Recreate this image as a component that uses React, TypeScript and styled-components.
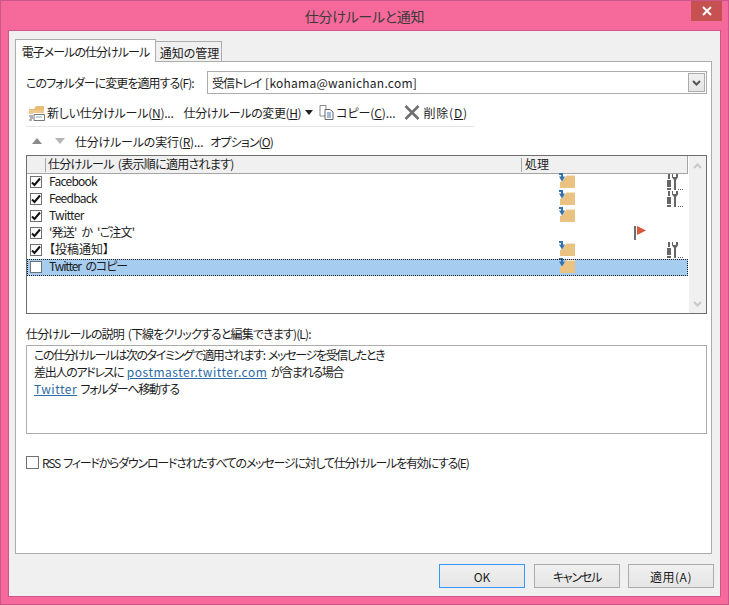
import React from "react";
import styled, { createGlobalStyle } from "styled-components";

const Global = createGlobalStyle`
  html, body { margin: 0; padding: 0; background: #f6699b; }
  * { box-sizing: border-box; }
`;

const Win = styled.div`
  width: 729px;
  height: 605px;
  background: #f6699b;
  border: 1px solid #c9578a;
  display: flex;
  flex-direction: column;
  padding: 0 7px 7px 7px;
  font-family: "Noto Sans CJK JP", "Noto Sans", sans-serif;
  font-feature-settings: "palt";
  font-size: 12px;
  color: #1c1c1c;
  overflow: hidden;
  position: relative;
`;
const TitleBar = styled.div`
  height: 29px;
  flex: none;
  display: flex;
  align-items: center;
  justify-content: center;
  font-size: 14px;
  letter-spacing: -0.3px;
  color: #3a3a3a;
  padding-top: 1px;
`;
const Close = styled.div`
  position: absolute;
  top: 0;
  right: 6px;
  width: 31px;
  height: 20px;
  background: #c75050;
  display: flex;
  align-items: center;
  justify-content: center;
`;
const Client = styled.div`
  flex: 1;
  background: #f0f0f0;
  border: 1px solid #d0558a;
  display: flex;
  flex-direction: column;
  padding: 8px 8px 8px 6px;
`;
const Tabs = styled.div`
  display: flex;
  align-items: flex-end;
  height: 23px;
  flex: none;
  margin-bottom: -1px;
  position: relative;
  z-index: 1;
`;
const Tab = styled.div<{ $active?: boolean }>`
  height: ${(p) => (p.$active ? 23 : 21)}px;
  width: ${(p) => (p.$active ? 141 : 67)}px;
  background: ${(p) => (p.$active ? "#fff" : "#f0f0f0")};
  border: 1px solid #acacac;
  border-bottom: ${(p) => (p.$active ? "none" : "1px solid #acacac")};
  margin-left: ${(p) => (p.$active ? 0 : -1)}px;
  display: flex;
  align-items: center;
  justify-content: center;
  white-space: nowrap;
  padding-top: ${(p) => (p.$active ? 0 : 1)}px;
  padding-left: ${(p) => (p.$active ? 0 : 2)}px;
`;
const Panel = styled.div`
  flex: 1;
  background: #fff;
  border: 1px solid #acacac;
  padding: 9px 4px 0 10px;
  display: flex;
  flex-direction: column;
`;
const Txt = styled.span<{ $ls?: number }>`
  letter-spacing: ${(p) => p.$ls ?? 0}px;
  word-spacing: 2px;
  white-space: nowrap;
`;
const FolderRow = styled.div`
  display: flex;
  align-items: center;
  height: 23px;
`;
const FolderLabel = styled.div`
  width: 181px;
  flex: none;
  white-space: nowrap;
`;
const Combo = styled.div`
  flex: 1;
  height: 23px;
  border: 1px solid #acacac;
  display: flex;
  align-items: center;
  justify-content: space-between;
  padding: 0 1px 0 4px;
`;
const ComboButton = styled.div`
  width: 17px;
  height: 19px;
  border: 1px solid #acacac;
  background: linear-gradient(#f0f0f0, #e5e5e5);
  display: flex;
  align-items: center;
  justify-content: center;
`;
const Toolbar = styled.div`
  width: 448px;
  height: 28px;
  margin-top: 5px;
  border-bottom: 1px solid #e6e6e6;
  display: flex;
  align-items: center;
  padding: 0 0 0 2px;
`;
const ToolItem = styled.div<{ $ml?: number; $gap?: number }>`
  display: flex;
  align-items: center;
  gap: ${(p) => p.$gap ?? 2}px;
  margin-left: ${(p) => p.$ml ?? 0}px;
  white-space: nowrap;
`;
const Toolbar2 = styled.div`
  height: 24px;
  margin-top: 2px;
  display: flex;
  align-items: center;
  padding-left: 6px;
`;
const Key = styled.span`
  text-decoration: underline;
  text-underline-offset: 1px;
`;
const ListBox = styled.div`
  height: 159px;
  margin-top: 2px;
  border: 1px solid #6e6e6e;
  display: flex;
  flex: none;
`;
const ListMain = styled.div`
  flex: 1;
  display: flex;
  flex-direction: column;
`;
const HeaderRow = styled.div`
  height: 18px;
  flex: none;
  background: #f0f0f0;
  border-bottom: 1px solid #a5a5a5;
  border-right: 1px solid #a5a5a5;
  display: grid;
  grid-template-columns: 18px 476px 1fr;
  align-items: center;
`;
const HeaderCell = styled.div<{ $pad: number }>`
  height: 14px;
  line-height: 12px;
  border-left: 1px solid #a5a5a5;
  padding-left: ${(p) => p.$pad}px;
  white-space: nowrap;
`;
const Row = styled.div<{ $sel?: boolean }>`
  height: 17px;
  flex: none;
  display: grid;
  grid-template-columns: 19px 475px 1fr;
  align-items: center;
  background: ${(p) => (p.$sel ? "#a6cdf0" : "transparent")};
  outline: ${(p) => (p.$sel ? "1px dotted #222" : "none")};
  outline-offset: -1px;
`;
const CheckBox = styled.div`
  width: 12px;
  height: 12px;
  margin: -1px 0 0 3px;
  background: #fff;
  border: 1px solid #707070;
  display: flex;
  align-items: center;
  justify-content: center;
`;
const RowName = styled.div<{ $ls: number }>`
  padding-left: 3px;
  margin-top: -4px;
  white-space: nowrap;
  letter-spacing: ${(p) => p.$ls}px;
  word-spacing: 3px;
`;
const Actions = styled.div`
  display: grid;
  grid-template-columns: 75px 33px 1fr;
  padding-left: 38px;
  align-items: start;
  height: 17px;
`;
const ScrollBar = styled.div`
  width: 17px;
  flex: none;
  background: #f0f0f0;
  display: flex;
  flex-direction: column;
  justify-content: space-between;
  align-items: center;
  padding: 7px 0 6px;
  margin-left: 1px;
`;
const DescLabel = styled.div`
  margin-top: 11px;
  height: 17px;
  line-height: 17px;
`;
const DescBox = styled.div`
  height: 89px;
  margin-top: 3px;
  border: 1px solid #acacac;
  padding: 0 7px;
  line-height: 17px;
`;
const Link = styled.span`
  color: #2c6aa5;
  text-decoration: underline;
  text-underline-offset: 1px;
  letter-spacing: 0.5px;
`;
const RssRow = styled.div`
  display: flex;
  align-items: center;
  gap: 3px;
  margin-top: 20px;
  height: 16px;
`;
const RssBox = styled.div`
  width: 13px;
  height: 13px;
  flex: none;
  border: 1px solid #707070;
  background: #fff;
`;
const Footer = styled.div`
  display: flex;
  justify-content: flex-end;
  gap: 8px;
  margin-top: 10px;
  margin-right: -2px;
  height: 24px;
  flex: none;
`;
const Btn = styled.div<{ $def?: boolean }>`
  width: 86px;
  height: 24px;
  margin-right: ${(p) => (p.$def ? 1 : 0)}px;
  border: 1px solid ${(p) => (p.$def ? "#3399ff" : "#acacac")};
  background: linear-gradient(#f0f0f0, #e5e5e5);
  display: flex;
  align-items: center;
  justify-content: center;
`;
const IconSlot = styled.div<{ $top: number }>`
  margin-top: ${(p) => p.$top}px;
  height: 0;
`;

const Check = () => (
  <svg width="10" height="10" viewBox="0 0 10 10">
    <path d="M1 5.5 L3.5 8 L9 1.5" fill="none" stroke="#111" strokeWidth="2" />
  </svg>
);
const MoveIcon = () => (
  <svg width="17" height="16" viewBox="0 0 17 16" style={{ display: "block" }}>
    <path d="M1 15 V9 H2 L8 2 H16 V15 Z" fill="#eac282" />
    <path d="M8 2 H16 V3 H7 Z" fill="#f7e4c4" />
    <path d="M0 0 H4 V3.5 H6 L3 8.5 L0 3.5 H2 V2 H0 Z" fill="#3672ad" />
  </svg>
);
const ToolsIcon = () => (
  <svg width="16" height="16" viewBox="0 0 16 16" style={{ display: "block" }}>
    <path d="M1 0 H3 V5 H1 Z M0 6 H4 V13 H0 Z M0 14 H4 V16 H0 Z" fill="#666" />
    <path d="M5 0 H6 V3 H9 V0 H11 V3.5 L9 6 V16 H7 V6 L5 3.5 Z" fill="#666" />
    <path d="M11 15 h1 v1 h-1 z M13 15 h1 v1 h-1 z M15 15 h1 v1 h-1 z" fill="#666" />
  </svg>
);
const FlagIcon = () => (
  <svg width="13" height="15" viewBox="0 0 13 15" style={{ display: "block" }}>
    <path d="M0 0 H2 V14 H0 Z" fill="#6d6d6d" />
    <path d="M3 0 L12 4.5 L3 9 Z" fill="#d9583b" />
  </svg>
);
const NewRuleIcon = () => (
  <svg width="17" height="16" viewBox="0 0 17 16">
    <path d="M1 6 V4 H6 L8 1 H16 V6 Z" fill="#e8bd78" />
    <path d="M1 9 V5 H16 V8 H5 V9 Z" fill="#edc98d" />
    <path d="M6 9.5 H16.5 V15.5 H6 Z" fill="#fff" stroke="#777" />
    <path d="M8 12 H14" stroke="#8aa" />
    <path d="M1 11 H5 M2 13 H5 M1 15 H4" stroke="#666" />
  </svg>
);
const CopyIcon = () => (
  <svg width="15" height="15" viewBox="0 0 15 15">
    <path d="M1 .5 H7 V11 H1 Z" fill="#fff" stroke="#888" />
    <path d="M6 4.5 H11 L14 7 V14.5 H6 Z" fill="#fff" stroke="#666" />
    <path d="M8 8 H12 M8 10 H12 M8 12 H12" stroke="#3f77b0" />
  </svg>
);
const DeleteIcon = () => (
  <svg width="16" height="15" viewBox="0 0 16 15">
    <path d="M1.5 1 L14.5 14 M14.5 1 L1.5 14" stroke="#707070" strokeWidth="2.6" />
  </svg>
);
const Tri = ({ up, color }: { up?: boolean; color: string }) => (
  <svg width="10" height="6" viewBox="0 0 10 6">
    <path d={up ? "M5 0 L10 6 H0 Z" : "M0 0 H10 L5 6 Z"} fill={color} />
  </svg>
);
const Chevron = ({ up, color, w = 2 }: { up?: boolean; color: string; w?: number }) => (
  <svg width="9" height="6" viewBox="0 0 9 6">
    <path d={up ? "M1 5 L4.5 1.5 L8 5" : "M1 1 L4.5 4.5 L8 1"} fill="none" stroke={color} strokeWidth={w} />
  </svg>
);

const rules: { name: string; ls: number; checked: boolean; move?: boolean; flag?: boolean; tools?: boolean; sel?: boolean }[] = [
  { name: "Facebook", ls: -0.75, checked: true, move: true, tools: true },
  { name: "Feedback", ls: -0.75, checked: true, move: true, tools: true },
  { name: "Twitter", ls: -0.7, checked: true, move: true },
  { name: "'発送' か 'ご注文'", ls: -0.8, checked: true, flag: true },
  { name: "【投稿通知】", ls: 0, checked: true, move: true, tools: true },
  { name: "Twitter のコピー", ls: -1.1, checked: false, move: true, sel: true },
];

export default function App() {
  return (
    <Win>
      <Global />
      <TitleBar>仕分けルールと通知</TitleBar>
      <Close>
        <svg width="10" height="10" viewBox="0 0 10 10">
          <path d="M1 1 L9 9 M9 1 L1 9" stroke="#fff" strokeWidth="2" />
        </svg>
      </Close>
      <Client>
        <Tabs>
          <Tab $active><Txt $ls={-0.95}>電子メールの仕分けルール</Txt></Tab>
          <Tab>通知の管理</Tab>
        </Tabs>
        <Panel>
          <FolderRow>
            <FolderLabel><Txt $ls={-0.95}>このフォルダーに変更を適用する(F):</Txt></FolderLabel>
            <Combo>
              <span><Txt $ls={-1}>受信トレイ </Txt><Txt $ls={0.25}>[kohama@wanichan.com]</Txt></span>
              <ComboButton>
                <Chevron color="#555" />
              </ComboButton>
            </Combo>
          </FolderRow>
          <Toolbar>
            <ToolItem>
              <NewRuleIcon />
              <Txt $ls={-0.25}>新しい仕分けルール(<Key>N</Key>)...</Txt>
            </ToolItem>
            <ToolItem $ml={10} $gap={4}>
              <Txt $ls={-0.4}>仕分けルールの変更(<Key>H</Key>)</Txt>
              <svg width="8" height="5" viewBox="0 0 8 5"><path d="M0 0 H8 L4 5 Z" fill="#222" /></svg>
            </ToolItem>
            <ToolItem $ml={6}>
              <CopyIcon />
              <Txt $ls={-0.1}>コピー(<Key>C</Key>)...</Txt>
            </ToolItem>
            <ToolItem $ml={9} $gap={3}>
              <DeleteIcon />
              <Txt $ls={0.8}>削除(<Key>D</Key>)</Txt>
            </ToolItem>
          </Toolbar>
          <Toolbar2>
            <Tri up color="#8a8a8a" />
            <ToolItem $ml={13}><Tri color="#b5b5b5" /></ToolItem>
            <ToolItem $ml={10}><Txt $ls={-0.2}>仕分けルールの実行(<Key>R</Key>)...</Txt></ToolItem>
            <ToolItem $ml={7}><Txt $ls={-0.9}>オプション(<Key>O</Key>)</Txt></ToolItem>
          </Toolbar2>
          <ListBox>
            <ListMain>
              <HeaderRow>
                <span />
                <HeaderCell $pad={2}><Txt $ls={-0.7}>仕分けルール (表示順に適用されます)</Txt></HeaderCell>
                <HeaderCell $pad={3}>処理</HeaderCell>
              </HeaderRow>
              {rules.map((r) => (
                <Row key={r.name} $sel={r.sel}>
                  <CheckBox>{r.checked && <Check />}</CheckBox>
                  <RowName $ls={r.ls}>{r.name}</RowName>
                  <Actions>
                    <IconSlot $top={-1}>{r.move && <MoveIcon />}</IconSlot>
                    <IconSlot $top={1}>{r.flag && <FlagIcon />}</IconSlot>
                    <IconSlot $top={0}>{r.tools && <ToolsIcon />}</IconSlot>
                  </Actions>
                </Row>
              ))}
            </ListMain>
            <ScrollBar>
              <Chevron up color="#c8c8c8" />
              <Chevron color="#c8c8c8" />
            </ScrollBar>
          </ListBox>
          <DescLabel><Txt $ls={-0.85}>仕分けルールの説明 (下線をクリックすると編集できます)(L):</Txt></DescLabel>
          <DescBox>
            <div><Txt $ls={-1.35}>この仕分けルールは次のタイミングで適用されます: メッセージを受信したとき</Txt></div>
            <div><Txt $ls={-1.3}>差出人のアドレスに </Txt><Link>postmaster.twitter.com</Link><Txt $ls={-1.3}> が含まれる場合</Txt></div>
            <div><Link>Twitter</Link><Txt $ls={-1.3}> フォルダーへ移動する</Txt></div>
          </DescBox>
          <RssRow>
            <RssBox />
            <Txt $ls={-1.25}>RSS フィードからダウンロードされたすべてのメッセージに対して仕分けルールを有効にする(E)</Txt>
          </RssRow>
        </Panel>
        <Footer>
          <Btn $def>OK</Btn>
          <Btn><Txt $ls={-1.2}>キャンセル</Txt></Btn>
          <Btn><Txt $ls={0.5}>適用(A)</Txt></Btn>
        </Footer>
      </Client>
    </Win>
  );
}
